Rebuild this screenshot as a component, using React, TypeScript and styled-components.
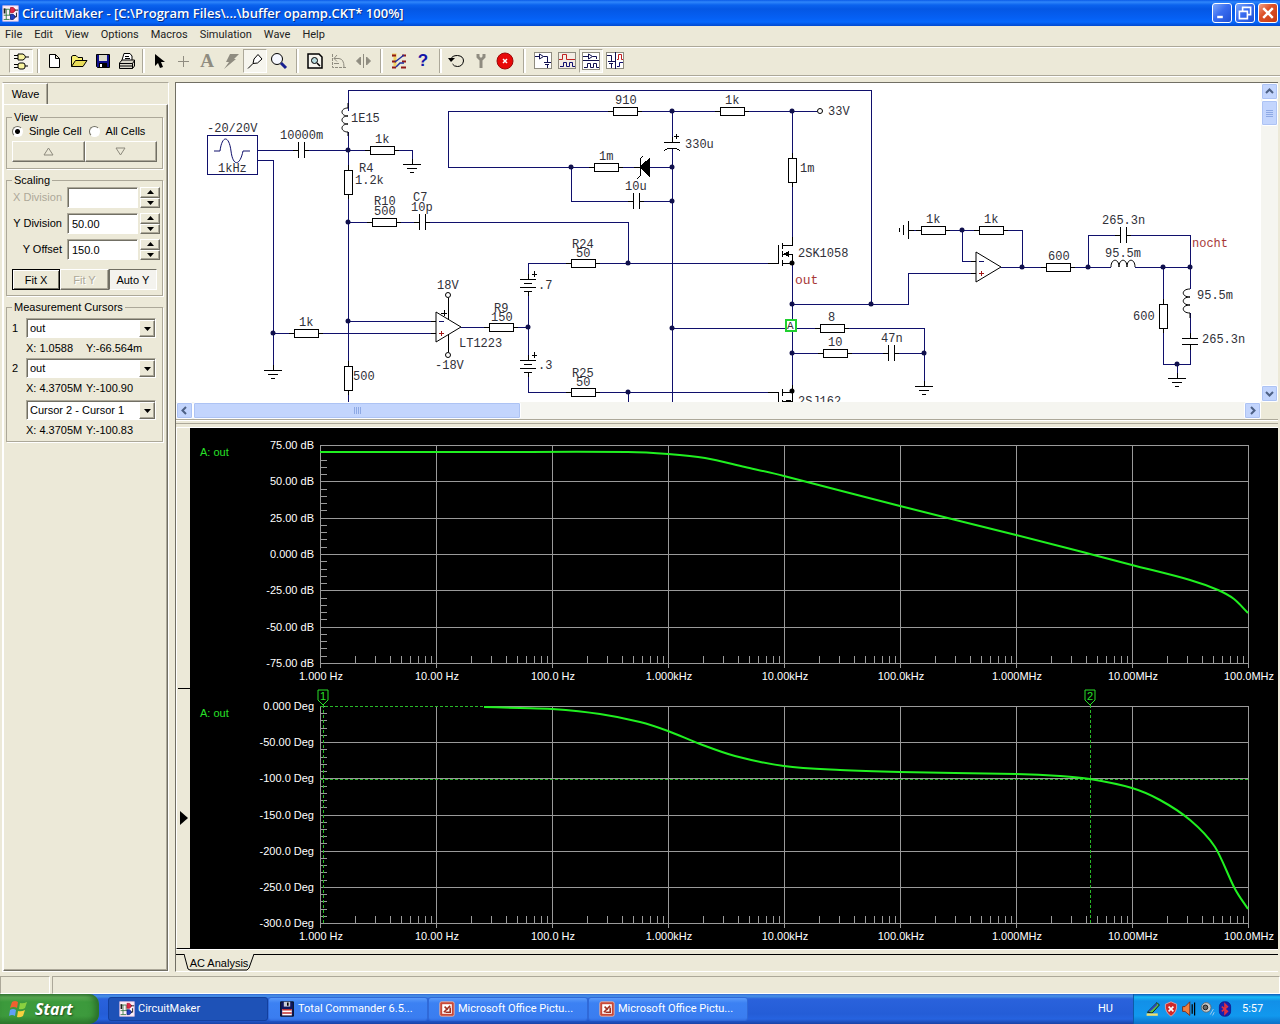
import React from "react";
import styled, { createGlobalStyle, css } from "styled-components";

const face = "#ece9d8";
const shade = "#aca899";
const dark = "#716f64";
const ui = '"Liberation Sans", Arial, sans-serif';
const shell = 'Roboto, "Noto Sans", sans-serif';

const Global = createGlobalStyle`
  * { box-sizing: border-box; }
  body { margin: 0; background: ${face}; font: 11px/14px ${ui}; color: #000; }
  button, input, select { font: inherit; color: inherit; margin: 0; border-radius: 0; }
`;

const raised = css`
  background: ${face};
  border: 1px solid;
  border-color: #fff ${dark} ${dark} #fff;
  box-shadow: inset -1px -1px ${shade};
`;
const sunken = css`
  border: 1px solid;
  border-color: ${shade} #fff #fff ${shade};
  box-shadow: inset 1px 1px ${dark};
`;

const Desktop = styled.div`
  height: 100vh;
  display: flex;
  flex-direction: column;
  overflow: hidden;
`;

/* ---------- title and menu ---------- */
const TitleBar = styled.header`
  flex: none;
  height: 26px;
  display: flex;
  align-items: center;
  gap: 3px;
  padding: 0 2px;
  background: linear-gradient(#0a5be8 0, #2f86fb 2px, #0b63ee 5px, #0457e4 9px, #0560f4 18px, #0668fc 22px, #0149cf 26px);
`;
const Title = styled.h1`
  flex: 1;
  margin: 0;
  color: #fff;
  font: 600 13px/20px "Open Sans", "Noto Sans", sans-serif;
  text-shadow: 1px 1px #0a2f86;
  white-space: nowrap;
`;
const WindowButtons = styled.div`
  display: flex;
  gap: 3px;
`;
const WindowButton = styled.button<{ $close?: boolean }>`
  width: 20px;
  height: 20px;
  padding: 0;
  border: 1px solid #fff;
  border-radius: 3px;
  display: grid;
  place-items: center;
  background: ${(p) =>
    p.$close
      ? "linear-gradient(135deg, #f0a088, #dd5128 40%, #c63a12)"
      : "linear-gradient(135deg, #7fa9fa, #3a6df0 45%, #1f4fd4)"};
`;
const MenuBar = styled.nav`
  flex: none;
  height: 20px;
  display: flex;
  align-items: flex-start;
  gap: 12px;
  padding: 2px 0 0 5px;
`;
const MenuItem = styled.button`
  padding: 0;
  border: 0;
  background: none;
  color: #222;
  font: 11px/14px ${shell};
`;

/* ---------- toolbar ---------- */
const ToolBar = styled.div`
  flex: none;
  height: 30px;
  display: flex;
  align-items: center;
  padding-left: 9px;
  border-top: 1px solid ${shade};
  border-bottom: 1px solid ${shade};
  box-shadow: inset 0 1px #fff, 0 1px #fff;
`;
const Tool = styled.button<{ $on?: boolean }>`
  width: 24px;
  height: 24px;
  padding: 0;
  display: grid;
  place-items: center;
  background: ${(p) => (p.$on ? "#f6f5ee" : "none")};
  border: 1px solid;
  border-color: ${(p) => (p.$on ? `${shade} #fff #fff ${shade}` : "transparent")};
`;
const ToolGap = styled.span<{ $w: number }>`
  width: ${(p) => p.$w}px;
  height: 24px;
  display: flex;
  justify-content: center;
  &::before {
    content: "";
    width: 2px;
    border-left: 1px solid ${shade};
    background: #fff;
  }
`;

/* ---------- side panel ---------- */
const Workspace = styled.div`
  flex: 1;
  min-height: 0;
  display: flex;
  gap: 6px;
  padding: 6px 2px 4px 2px;
`;
const Side = styled.aside`
  flex: none;
  width: 167px;
  display: flex;
  flex-direction: column;
  border-left: 1px solid #fff;
  border-right: 1px solid #fff;
  border-bottom: 1px solid #fff;
  border-top: 1px solid ${shade};
`;
const SideTab = styled.button`
  align-self: flex-start;
  width: 45px;
  height: 21px;
  padding: 0;
  ${raised};
  border-bottom: 0;
  box-shadow: inset -1px 0 ${shade};
`;
const SidePage = styled.form`
  flex: 1;
  display: flex;
  flex-direction: column;
  gap: 4px;
  padding: 5px 4px 0 2px;
  border: 1px solid;
  border-color: #fff ${dark} ${dark} #fff;
  box-shadow: inset -1px -1px ${shade};
`;
const Group = styled.fieldset<{ $h: number }>`
  height: ${(p) => p.$h}px;
  min-width: 0;
  margin: 0;
  padding: 0 5px;
  border: 1px solid ${shade};
  box-shadow: 1px 1px #fff;
`;
const Legend = styled.legend`
  height: 14px;
  padding: 0 2px;
`;
const Radios = styled.div`
  display: flex;
  gap: 7px;
  height: 17px;
`;
const RadioLabel = styled.label`
  display: flex;
  align-items: center;
  gap: 6px;
  height: 14px;
  white-space: nowrap;
`;
const Radio = styled.input`
  appearance: none;
  width: 11px;
  height: 11px;
  border-radius: 50%;
  border: 1px solid;
  border-color: ${dark} #fff #fff ${dark};
  background: #fff;
  &:checked {
    background: radial-gradient(#000 0 2px, #fff 3px);
  }
`;
const ButtonRow = styled.div`
  display: flex;
  height: 21px;
`;
const ScaleButtons = styled(ButtonRow)`
  margin-top: 4px;
`;
const PushButton = styled.button<{ $kind?: "default" | "down" }>`
  flex: 1;
  padding: 0;
  ${raised};
  ${(p) => p.$kind === "default" && css`border-color: #000; box-shadow: inset 1px 1px #fff, inset -1px -1px ${dark};`}
  ${(p) => p.$kind === "down" && css`border-color: ${dark} #fff #fff ${dark}; background: #f4f3ee; box-shadow: none;`}
  &:disabled {
    color: ${shade};
    text-shadow: 1px 1px #fff;
  }
`;
const FieldRow = styled.div`
  display: grid;
  grid-template-columns: 50px 71px 17px;
  column-gap: 5px;
  align-items: start;
  height: 26px;
`;
const FieldLabel = styled.label<{ $off?: boolean }>`
  line-height: 20px;
  text-align: right;
  white-space: nowrap;
  direction: rtl;
  color: ${(p) => (p.$off ? shade : "#000")};
`;
const Field = styled.input`
  width: 71px;
  height: 21px;
  padding: 0 4px;
  background: #fff;
  ${sunken};
`;
const Spinner = styled.div`
  display: flex;
  flex-direction: column;
  height: 21px;
  margin-left: -3px;
`;
const SpinButton = styled.button`
  flex: 1;
  padding: 0;
  display: grid;
  place-items: center;
  ${raised};
`;
const CursorBlock = styled.div`
  padding-top: 4px;
`;
const CursorRow = styled.div`
  display: grid;
  grid-template-columns: 14px 130px;
  align-items: center;
  height: 20px;
`;
const Combo = styled.div`
  grid-column: 2;
  position: relative;
`;
const Select = styled.select`
  appearance: none;
  display: block;
  width: 100%;
  height: 20px;
  padding: 0 3px;
  background: #fff;
  ${sunken};
`;
const ComboArrow = styled.span`
  position: absolute;
  top: 2px;
  right: 1px;
  width: 16px;
  height: 17px;
  display: grid;
  place-items: center;
  pointer-events: none;
  ${raised};
`;
const Readout = styled.div`
  display: grid;
  grid-template-columns: 60px 1fr;
  height: 20px;
  line-height: 20px;
  padding-left: 14px;
  white-space: nowrap;
`;
const TallReadout = styled(Readout)`
  height: 22px;
`;

/* ---------- documents ---------- */
const Documents = styled.main`
  flex: 1;
  min-width: 0;
  display: flex;
  flex-direction: column;
  border-left: 1px solid ${dark};
  border-top: 1px solid ${dark};
  border-bottom: 1px solid #fff;
`;
const SheetView = styled.section`
  flex: none;
  display: grid;
  grid-template-columns: 1fr 17px;
  grid-template-rows: 319px 17px;
  background: ${face};
`;
const Sheet = styled.svg`
  width: 100%;
  height: 100%;
  background: #fff;
  overflow: hidden;
  font: 12px "Liberation Mono", monospace;
`;
const Track = styled.div<{ $vertical?: boolean }>`
  display: flex;
  flex-direction: ${(p) => (p.$vertical ? "column" : "row")};
  background: #f5f5f0;
`;
const scrollFace = css`
  border: 1px solid #fff;
  border-radius: 2px;
  background: #c3d5fd;
  box-shadow: inset 0 0 0 1px #adc3f4;
`;
const Arrow = styled.button`
  ${scrollFace};
  flex: none;
  width: 17px;
  height: 17px;
  padding: 0;
  display: grid;
  place-items: center;
`;
const Thumb = styled.div<{ $size: number; $vertical?: boolean }>`
  ${scrollFace};
  width: ${(p) => (p.$vertical ? 17 : p.$size)}px;
  height: ${(p) => (p.$vertical ? p.$size : 17)}px;
  display: grid;
  place-items: center;
`;
const Space = styled.span`
  flex: 1;
`;
const Splitter = styled.div`
  flex: none;
  height: 9px;
  border-top: 1px solid ${shade};
  border-bottom: 1px solid #fff;
  box-shadow: inset 0 1px #fff, inset 0 -3px ${face}, inset 0 -4px ${shade};
`;
const PlotView = styled.section`
  flex: 1;
  min-height: 0;
  display: flex;
`;
const Gutter = styled.div`
  width: 14px;
  display: flex;
  flex-direction: column;
  padding-left: 1px;
  border-left: 1px solid #fff;
  border-bottom: 1px solid #000;
`;
const GutterCell = styled.div<{ $line?: boolean }>`
  flex: 1;
  display: flex;
  align-items: center;
  padding-left: 2px;
  border-bottom: ${(p) => (p.$line ? "1px solid #000" : "0")};
`;
const Plot = styled.svg`
  flex: 1;
  height: 100%;
  min-width: 0;
  background: #000;
  overflow: hidden;
  font: 11px ${ui};
`;
const TabStrip = styled.div`
  flex: none;
  height: 22px;
  display: flex;
  border-top: 1px solid #fff;
  padding-top: 4px;
`;
const StripLine = styled.span<{ $w?: number }>`
  ${(p) => (p.$w ? `width: ${p.$w}px` : "flex: 1")};
  border-top: 1px solid #000;
`;
const PlotTab = styled.button`
  position: relative;
  width: 70px;
  height: 17px;
  padding: 0;
  border: 0;
  background: none;
  white-space: nowrap;
`;
const TabOutline = styled.svg`
  position: absolute;
  inset: 0;
`;

/* ---------- status and taskbar ---------- */
const Status = styled.footer`
  flex: none;
  height: 18px;
  display: grid;
  grid-template-columns: 50px 1fr;
  gap: 2px;
`;
const StatusCell = styled.div`
  border: 1px solid;
  border-color: ${shade} #fff #fff ${shade};
`;
const TaskBar = styled.footer`
  flex: none;
  height: 30px;
  display: flex;
  background: linear-gradient(#3168d5 0, #4993e6 2px, #2a62dc 5px, #245dd7 20px, #2663e0 25px, #1941a5 30px);
  color: #fff;
  font: 11px/14px ${shell};
`;
const StartButton = styled.button`
  width: 99px;
  padding: 0 0 0 9px;
  margin-right: 9px;
  border: 0;
  border-radius: 0 10px 10px 0;
  display: flex;
  align-items: center;
  gap: 6px;
  background: linear-gradient(#3c813c 0, #5eac56 3px, #3c9a3c 8px, #3d9a3d 22px, #2f7c2f 30px);
  box-shadow: inset -4px 0 6px #2a6e2a;
  color: #fff;
  font: italic 700 16px/20px "Open Sans", "Noto Sans", sans-serif;
  text-shadow: 1px 1px 2px #1d4a1d;
`;
const Task = styled.button<{ $on?: boolean }>`
  flex: 0 1 160px;
  min-width: 0;
  height: 24px;
  margin-top: 3px;
  padding: 0 8px 0 10px;
  display: flex;
  align-items: center;
  gap: 3px;
  white-space: nowrap;
  border: 1px solid ${(p) => (p.$on ? "#123f9e" : "#3069d8")};
  border-radius: 3px;
  background: ${(p) => (p.$on ? "#1e52b7" : "linear-gradient(#5b9bfa, #3c81f3 5px, #3a7df0 20px, #3271e6)")};
  color: #fff;
  font-family: ${shell};
`;
const Lang = styled.span`
  align-self: center;
  margin-left: auto;
  padding-right: 20px;
`;
const Tray = styled.div`
  width: 147px;
  display: flex;
  align-items: center;
  gap: 2px;
  padding-left: 11px;
  border-left: 1px solid #0d5ba8;
  background: linear-gradient(#0c59b9 0, #18b9f6 3px, #1290e8 7px, #1198ee 22px, #0d70c8 30px);
`;
const Clock = styled.time`
  margin-left: 7px;
`;

/* ---------- icons ---------- */
const Icon = ({ children, size = 20 }: { children: React.ReactNode; size?: number }) => (
  <svg width={size} height={size} viewBox="0 0 20 20" fill="none" stroke="#000" aria-hidden="true">
    {children}
  </svg>
);

const Logo = ({ size = 17 }: { size?: number }) => (
  <Icon size={size}>
    <rect x="1" y="1" width="18" height="18" fill="#fdf0f8" stroke="#ecc4e2" />
    <path d="M2 5H9M5 5V17M9 5V12M2 12H10M2 17H9" stroke="#287038" />
    <path d="M3 4V10" stroke="#202020" strokeWidth="2" />
    <path d="M10 3H13Q18 6 13 9H10Z" fill="#e02848" stroke="#b01830" />
    <path d="M10 11H13Q18 14 13 17H10Z" fill="#2040c0" stroke="#102080" />
    <path d="M15 6H19M15 14H17V9" />
  </Icon>
);

const gray = "#8f8c80";
const toolIcons: Record<string, React.ReactNode> = {
  Parts: (
    <>
      <path d="M7 3H12Q17 6 12 9H7Z" fill="#f8f4a0" />
      <rect x="7" y="12" width="7" height="6" rx="2" fill="#f8f4a0" />
      <path d="M3 4.500H7M3 7.500H7M15 6H18M3 13.500H7M3 16.500H7M14 15H17" />
    </>
  ),
  New: <path d="M4.500 3.500H10.500L14.500 7.500V16.500H4.500ZM10.500 3.500V7.500H14.500" fill="#fff" />,
  Open: (
    <>
      <path d="M2.500 15.500V5.500L4 4.500H7L9 6.500H13.500V9" fill="#f6ee70" />
      <path d="M2.500 15.500L6.500 9.500H18L14 15.500Z" fill="#e8dc58" />
    </>
  ),
  Save: (
    <>
      <path d="M3.500 3.500H16.500V16.500H4.500L3.500 15.500Z" fill="#10108c" />
      <path d="M6 4H14V10H6Z" fill="#dcdccc" stroke="none" />
      <path d="M6 12H14V16H6Z" fill="#000" stroke="none" />
      <path d="M7 13H9V16H7Z" fill="#fff" stroke="none" />
    </>
  ),
  Print: (
    <>
      <path d="M5 9L7 2.500H13L15 5V9" fill="#fff" />
      <path d="M8 5.500H12M8 7.500H13" />
      <path d="M2.500 12L5 9H17.500V15L15.500 17.500H2.500Z" fill="#d8d5c8" />
      <path d="M2.500 12.500H15.500V17.500M15.500 12.500L17.500 9.500M3 15H15" />
    </>
  ),
  Select: <path d="M6 3V15L9 12L11 17L14 16L12 11H16Z" fill="#000" stroke="none" />,
  Wire: <path d="M10.500 5V16M5 10.500H16" stroke={gray} />,
  Delete: <path d="M9 3H18L13 8H15L3 18L8 11H5Z" fill={gray} stroke="none" />,
  Probe: <path d="M3 17.500L8 12.500M8 12.500L9 8L13 3.500L17 8L12.500 12Z" fill="#fff" />,
  Zoom: (
    <>
      <circle cx="8" cy="8" r="5.500" fill="#f6f8ff" />
      <path d="M12 12L17 17" stroke="#182090" strokeWidth="3" />
    </>
  ),
  Fit: (
    <>
      <path d="M3 3H14L17 6V17H3Z" fill="#f6f5ee" strokeWidth="1.500" />
      <circle cx="9.500" cy="9.500" r="3" fill="#b8dce0" />
      <path d="M12 12L15 15" strokeWidth="1.500" />
    </>
  ),
  Rotate: (
    <>
      <path d="M3.500 3V16.500H18" stroke={gray} strokeDasharray="3 1" />
      <path d="M5 7.500H10Q15 8 15 16M8 4L5 7.500L8 10.500M5 12.500H10" stroke={gray} />
    </>
  ),
  Mirror: <path d="M7.500 6V14L3.500 10ZM13.500 6V14L17.500 10ZM10.500 3V17" fill={gray} stroke={gray} />,
  Trace: (
    <>
      <path d="M3 4H6V15" stroke="#f0d060" strokeWidth="3" />
      <path d="M3 4.500H7M3 10.500H7M13 4.500H17M3 16.500H7M12 16.500H17M13 10.500H17" stroke="#901818" strokeWidth="2" />
      <path d="M6 11L15 4M7 16L11 12H15" stroke="#2030a0" strokeWidth="1.500" />
    </>
  ),
  Reset: (
    <>
      <path d="M4 8Q5 4.500 10.500 4.500Q16.500 5 16.500 10Q15.500 15.500 10.500 15.500Q7 15.500 5.500 13" />
      <path d="M1 7H8L4 11Z" fill="#000" stroke="none" />
    </>
  ),
  Step: <path d="M7 3V6L10 9L13 6V3M10 8V17" stroke={gray} strokeWidth="3" />,
  Stop: (
    <>
      <circle cx="10" cy="10" r="8" fill="#e80808" stroke="#9c0808" />
      <path d="M8 8L12 12M12 8L8 12" stroke="#fff" strokeWidth="1.500" />
    </>
  ),
  Schematic: (
    <>
      <rect x="1.500" y="1.500" width="17" height="16" fill="#fff" stroke={gray} />
      <path d="M2 5.500H6M6.500 3V8L10.500 5.500ZM10.500 5.500H14.500V11M11 11.500H18M12 13.500H16M14.500 14V17" stroke="#101050" />
    </>
  ),
  Waves: (
    <>
      <rect x="1.500" y="1.500" width="17" height="16" fill="#f3ece4" stroke={gray} />
      <path d="M2 8.500H5.500V3.500H9.500V8.500H18" stroke="#c02020" />
      <path d="M3 15.500H6.500V11.500H9.500V15.500H12.500V11.500H15.500V15.500H18" stroke="#101070" />
    </>
  ),
  Split: (
    <>
      <rect x="1.500" y="1.500" width="17" height="17" fill="#fff" stroke={gray} />
      <path d="M2 5.500H7M7.500 3V8L11.500 5.500ZM11.500 5.500H15.500V8M2 9.500H18M3 16.500H6.500V12.500H9.500V16.500H12.500V12.500H15.500V16.500H18" stroke="#101050" />
    </>
  ),
  Tile: (
    <>
      <rect x="1.500" y="1.500" width="17" height="16" fill="#fff" stroke={gray} />
      <path d="M2 4.500H6.500V10M3 10.500H10M4 12.500H8M6.500 13V17M10.500 1V18" stroke="#101050" />
      <path d="M12 8.500H13.500V3.500H16.500V8.500H18" stroke="#c02020" />
      <path d="M12 15.500H14.500V11.500H18" stroke="#101070" />
    </>
  ),
};
const HelpMark = styled.span`
  color: #1515a8;
  font: 700 17px/20px ${ui};
`;
const TextMark = styled.span`
  color: ${gray};
  font: 700 19px/20px "Liberation Serif", serif;
`;
const toolGlyphs: Record<string, React.ReactNode> = {
  Help: <HelpMark>?</HelpMark>,
  Text: <TextMark>A</TextMark>,
};

const toolGroups: { gap: number; names: string[] }[] = [
  { gap: 10, names: ["Parts"] },
  { gap: 8, names: ["New", "Open", "Save", "Print"] },
  { gap: 12, names: ["Select", "Wire", "Text", "Delete", "Probe", "Zoom"] },
  { gap: 12, names: ["Fit", "Rotate", "Mirror"] },
  { gap: 10, names: ["Trace", "Help"] },
  { gap: 14, names: ["Reset", "Step", "Stop"] },
  { gap: 0, names: ["Schematic", "Waves", "Split", "Tile"] },
];
const pressed = ["Parts", "Probe", "Split"];

/* ---------- schematic parts ---------- */
const K = "#000";
const HRes = ({ x, y }: { x: number; y: number }) => (
  <>
    <path d={`M${x - 5} ${y}H${x + 29}`} stroke={K} />
    <rect x={x} y={y - 4} width="24" height="8" fill="#fff" stroke={K} />
  </>
);
const VRes = ({ x, y }: { x: number; y: number }) => (
  <>
    <path d={`M${x} ${y - 5}V${y + 29}`} stroke={K} />
    <rect x={x - 4} y={y} width="8" height="24" fill="#fff" stroke={K} />
  </>
);
const HCap = ({ x, y }: { x: number; y: number }) => (
  <>
    <path d={`M${x + 1} ${y}H${x + 5}`} stroke="#fff" />
    <path d={`M${x - 5} ${y}H${x}V${y - 8}V${y + 8}M${x + 11} ${y}H${x + 6}V${y - 8}V${y + 8}`} stroke={K} />
  </>
);
const Ground = ({ x, y }: { x: number; y: number }) => (
  <path d={`M${x} ${y - 5}V${y}M${x - 9} ${y}H${x + 9}M${x - 5} ${y + 4}H${x + 5}M${x - 2} ${y + 8}H${x + 2}`} stroke={K} />
);
const Battery = ({ x, y }: { x: number; y: number }) => (
  <>
    <path d={`M${x} ${y}V${y + 13}`} stroke="#fff" />
    <path
      d={`M${x} ${y - 5}V${y}M${x - 8} ${y}H${x + 8}M${x - 4} ${y + 4}H${x + 4}M${x - 8} ${y + 8}H${x + 8}M${x - 4} ${y + 12}H${x + 4}M${x} ${y + 12}V${y + 17}M${x + 4} ${y - 5}H${x + 9}M${x + 6} ${y - 8}V${y - 2}`}
      stroke={K}
    />
  </>
);
const OpAmp = ({ x, y }: { x: number; y: number }) => (
  <>
    <path d={`M${x} ${y - 15}V${y + 15}L${x + 25} ${y}Z`} fill="#fff" stroke={K} shapeRendering="auto" />
    <path d={`M${x - 5} ${y - 6}H${x}M${x - 5} ${y + 6}H${x}`} stroke={K} />
    <path d={`M${x + 3} ${y - 6}H${x + 8}`} stroke="#10106c" />
    <path d={`M${x + 3} ${y + 6}H${x + 8}M${x + 5} ${y + 4}V${y + 9}`} stroke="#a01818" />
  </>
);
const Mosfet = ({ x, y }: { x: number; y: number }) => (
  <>
    <path
      d={`M${x - 24} ${y}H${x - 14}V${y - 18}M${x - 10} ${y - 20}V${y - 14}M${x - 10} ${y - 12}V${y - 6}M${x - 10} ${y - 3}V${y + 3}M${x - 10} ${y}H${x}V${y - 9}H${x - 10}M${x - 10} ${y - 18}H${x}V${y - 26}`}
      stroke={K}
    />
    <path d={`M${x - 9} ${y - 9}L${x - 3} ${y - 12}V${y - 6}Z`} fill={K} />
  </>
);

const wires = [
  "M348 111V90H871V304", "M614 111H448V167H571", "M257 150H298M304 150H348", "M257 160H273V366",
  "M348 132V402", "M348 150H370M394 150H412V163", "M348 222H372M396 222H419M425 222H628V263",
  "M273 333H294M318 333H436", "M348 321H436", "M461 327H489M513 327H528", "M448 298V352",
  "M571 263H528V392H571", "M595 263H770M595 392H770", "M628 392V402", "M638 111H720M744 111H817",
  "M672 111V142M672 149V402", "M571 167H594M618 167H672M571 167V201H633M639 201H672",
  "M792 111V240M792 263V388", "M792 304H908V273H976", "M672 328H820M844 328H924V385",
  "M792 353H823M847 353H888M894 353H924", "M908 230H921M945 230H979M1003 230H1022V267",
  "M962 230V261H976", "M1001 267H1046M1070 267H1111M1135 267H1190", "M1088 267V235H1120M1126 235H1190V289",
  "M1190 313V338M1190 345V364H1163V267", "M1177 364V378",
];
const dots = [
  [348, 150], [348, 222], [348, 321], [273, 333], [528, 327], [571, 167], [672, 111], [672, 167], [672, 201],
  [672, 328], [792, 111], [628, 263], [628, 392], [792, 304], [871, 304], [792, 353], [924, 353], [962, 230],
  [1022, 267], [1088, 267], [1163, 267], [1190, 267], [1177, 364],
];
const hResistors = [
  [370, 150], [372, 222], [294, 333], [489, 327], [571, 263], [571, 392], [613, 111], [720, 111], [594, 167],
  [820, 328], [823, 353], [921, 230], [979, 230], [1046, 267],
];
const vResistors = [[348, 170], [348, 366], [792, 158], [1163, 304]];
const hCapacitors = [[298, 150], [419, 222], [633, 201], [888, 353], [1120, 235]];
const grounds = [[412, 164], [273, 370], [924, 386], [1177, 378]];
const sheetLabels: [number, number, string][] = [
  [207, 132, "-20/20V"], [218, 172, "1kHz"], [280, 139, "10000m"], [351, 122, "1E15"], [375, 143, "1k"],
  [359, 172, "R4"], [355, 184, "1.2k"], [374, 205, "R10"], [374, 215, "500"], [413, 201, "C7"], [411, 211, "10p"],
  [299, 326, "1k"], [353, 380, "500"], [437, 289, "18V"], [435, 369, "-18V"], [459, 347, "LT1223"],
  [494, 312, "R9"], [491, 321, "150"], [538, 289, ".7"], [538, 369, ".3"], [572, 248, "R24"], [576, 257, "50"],
  [572, 377, "R25"], [576, 386, "50"], [615, 104, "910"], [725, 104, "1k"], [828, 115, "33V"], [685, 148, "330u"],
  [599, 160, "1m"], [625, 190, "10u"], [800, 172, "1m"], [798, 257, "2SK1058"], [798, 405, "2SJ162"],
  [828, 321, "8"], [828, 346, "10"], [881, 342, "47n"], [926, 223, "1k"], [984, 223, "1k"], [1048, 260, "600"],
  [1102, 224, "265.3n"], [1105, 257, "95.5m"], [1133, 320, "600"], [1197, 299, "95.5m"], [1202, 343, "265.3n"],
];

const Schematic = () => (
  <Sheet role="img" aria-label="buffer opamp.CKT">
    <g transform="translate(-176 -83)" fill="none" shapeRendering="crispEdges">
      <g stroke="#10106c">
        {wires.map((d) => <path key={d} d={d} />)}
      </g>
      <rect x="207" y="135" width="50" height="39" fill="#fff" stroke="#10106c" />
      <path d="M214 151H220C222 135 229 135 231 151S240 166 243 151H250" stroke="#10106c" shapeRendering="auto" />
      {hResistors.map(([x, y]) => <HRes key={`${x} ${y}`} x={x} y={y} />)}
      {vResistors.map(([x, y]) => <VRes key={`${x} ${y}`} x={x} y={y} />)}
      {hCapacitors.map(([x, y]) => <HCap key={`${x} ${y}`} x={x} y={y} />)}
      {grounds.map(([x, y]) => <Ground key={`${x} ${y}`} x={x} y={y} />)}
      <Battery x={528} y={279} />
      <Battery x={528} y={360} />
      <OpAmp x={436} y={327} />
      <OpAmp x={976} y={267} />
      <g stroke={K}>
        <path d="M448 298V319M448 335V352M441 313H447M444 310V316" />
        <path d="M348 103V108M348 132V136M348 108C340 108 340 116 348 116C340 116 340 124 348 124C340 124 340 132 348 132" shapeRendering="auto" />
        <path d="M1190 289C1181 289 1181 297 1190 297C1181 297 1181 305 1190 305C1181 305 1181 313 1190 313V318" shapeRendering="auto" />
        <path d="M1111 267C1111 258 1119 258 1119 267C1119 258 1127 258 1127 267C1127 258 1135 258 1135 267" shapeRendering="auto" />
        <path d="M664 142H680M672 137V142M664 151Q667 148 672 148Q677 148 680 151M674 136H679M676 134V139" />
        <path d="M643 156L640 159V176L637 179M634 167H640" />
        <path d="M640 167L649 159V176Z" fill={K} />
        <path d="M1182 338H1198M1182 344H1198M1190 333V338M1190 344V350" />
        <path d="M908 221V239M903 225V235M899 228V232M908 230H914" />
        <path d="M768 392H778V402M782 389V396M782 392H792M782 400V402M782 401H792V385M786 400H790V402" />
        <g fill="#fff" shapeRendering="auto">
          <circle cx="448" cy="295" r="2.5" />
          <circle cx="448" cy="355" r="2.5" />
          <circle cx="820" cy="111" r="2.5" />
        </g>
      </g>
      <Mosfet x={792} y={263} />
      <g shapeRendering="auto" fill="#10104c">
        {dots.map(([x, y]) => <circle key={`${x} ${y}`} cx={x} cy={y} r="2.5" />)}
        <circle cx="792" cy="263" r="2.5" fill={K} />
        <circle cx="792" cy="391" r="2.5" fill={K} />
      </g>
      <rect x="786" y="320" width="10" height="11" fill="#fff" stroke="#20d030" strokeWidth="2" />
      <g fill="#303038">
        {sheetLabels.map(([x, y, t]) => <text key={`${x} ${y}`} x={x} y={y}>{t}</text>)}
        <text x="787" y="329" fontSize="11">A</text>
      </g>
      <g fill="#a83838">
        <text x="795" y="284" fontSize="13">out</text>
        <text x="1192" y="247">nocht</text>
      </g>
    </g>
  </Sheet>
);

/* ---------- analysis plots ---------- */
const left = 320;
const decade = 116;
const freqs = ["1.000 Hz", "10.00 Hz", "100.0 Hz", "1.000kHz", "10.00kHz", "100.0kHz", "1.000MHz", "10.00MHz", "100.0MHz"];
const smooth = (p: number[][]) =>
  p.reduce((d, [x, y], i) => {
    if (i === 0) return `M${x} ${y}`;
    const a = p[i - 2] || p[i - 1];
    const b = p[i - 1];
    const n = p[i + 1] || p[i];
    const h = (x - b[0]) / 3;
    const s1 = (y - a[1]) / (x - a[0]);
    const s2 = (n[1] - b[1]) / (n[0] - b[0]);
    return `${d}C${b[0] + h} ${b[1] + h * s1} ${x - h} ${y - h * s2} ${x} ${y}`;
  }, "");
const gain = [[320, 452], [480, 452], [628, 452], [668, 454], [705, 458], [745, 467], [784, 476], [900, 506], [1016, 535], [1090, 554], [1132, 565], [1190, 580], [1218, 590], [1234, 599], [1248, 613]];
const phase = [[484, 707], [520, 708], [552, 709], [600, 714], [640, 722], [668, 731], [700, 744], [735, 756], [784, 766], [840, 770], [900, 772], [1016, 774], [1060, 776], [1090, 779], [1132, 788], [1160, 800], [1190, 820], [1215, 847], [1235, 889], [1248, 909]];

const Grid = ({ top, bottom, labels }: { top: number; bottom: number; labels: string[] }) => {
  const step = (bottom - top) / (labels.length - 1);
  const count = (labels.length - 1) * 5;
  const lines = labels.map((_, i) => `M${left} ${Math.round(top + i * step)}H1248`).join("");
  const columns = freqs.map((_, i) => `M${left + i * decade} ${top}V${bottom + 5}`).join("");
  const sideTicks = Array.from({ length: count }, (_, i) => `M${left} ${Math.round(top + (i * step) / 5)}h7`).join("");
  const floorTicks = freqs
    .slice(1)
    .flatMap((_, i) => [2, 3, 4, 5, 6, 7, 8, 9].map((n) => `M${Math.round(left + (i + Math.log10(n)) * decade)} ${bottom}v-7`))
    .join("");
  return (
    <>
      <path d={lines + columns + sideTicks + floorTicks} stroke="#9a9a9a" shapeRendering="crispEdges" />
      <g fill="#fff">
        {labels.map((t, i) => (
          <text key={t} x="314" y={Math.round(top + i * step) + 4} textAnchor="end">{t}</text>
        ))}
        {freqs.map((t, i) => (
          <text key={t} x={left + 1 + i * decade} y={bottom + 17} textAnchor="middle">{t}</text>
        ))}
      </g>
    </>
  );
};

const Analysis = () => (
  <Plot role="img" aria-label="AC Analysis">
    <g transform="translate(-190 -428)" fill="none">
      <Grid top={445} bottom={663} labels={["75.00 dB", "50.00 dB", "25.00 dB", "0.000 dB", "-25.00 dB", "-50.00 dB", "-75.00 dB"]} />
      <Grid top={706} bottom={923} labels={["0.000 Deg", "-50.00 Deg", "-100.0 Deg", "-150.0 Deg", "-200.0 Deg", "-250.0 Deg", "-300.0 Deg"]} />
      <path d="M327 706H484" stroke="#000" shapeRendering="crispEdges" />
      <g stroke="#28b828" strokeDasharray="3 2" shapeRendering="crispEdges">
        <path d="M323 705V923M1090 705V923M320 706H484M320 779H1248" />
      </g>
      <g stroke="#28e028">
        <path d="M318 690H328V700L323 705L318 700ZM1085 690H1095V700L1090 705L1085 700Z" fill="#000" />
        <path d={smooth(gain) + smooth(phase)} stroke="#20f020" strokeWidth="2" />
      </g>
      <g fill="#28e028">
        <text x="323" y="700" textAnchor="middle">1</text>
        <text x="1090" y="700" textAnchor="middle">2</text>
        <text x="200" y="456">A: out</text>
        <text x="200" y="717">A: out</text>
      </g>
    </g>
  </Plot>
);

const Chevron = ({ turn }: { turn: number }) => (
  <svg width="9" height="9" viewBox="0 0 9 9" fill="none" stroke="#4d6185" strokeWidth="2" aria-hidden="true">
    <path d="M1 6L4.500 2.500L8 6" transform={`rotate(${turn} 4.5 4.5)`} />
  </svg>
);
const Tri = ({ down }: { down?: boolean }) => (
  <svg width="7" height="4" viewBox="0 0 7 4" aria-hidden="true">
    <path d={down ? "M0 0H7L3.500 4Z" : "M0 4H7L3.500 0Z"} />
  </svg>
);
const PaleTri = ({ down }: { down?: boolean }) => (
  <svg width="11" height="9" viewBox="0 0 11 9" fill="none" stroke="#8c897c" aria-hidden="true">
    <path d={down ? "M1 1H10L5.500 8Z" : "M1 8H10L5.500 1Z"} />
  </svg>
);

const Spin = ({ name }: { name: string }) => (
  <Spinner>
    <SpinButton type="button" aria-label={`Increase ${name}`}><Tri /></SpinButton>
    <SpinButton type="button" aria-label={`Decrease ${name}`}><Tri down /></SpinButton>
  </Spinner>
);
const Drop = ({ id, label, value }: { id: string; label?: string; value: string }) => (
  <Combo>
    <Select id={id} aria-label={label} defaultValue={value}><option>{value}</option></Select>
    <ComboArrow><Tri down /></ComboArrow>
  </Combo>
);

const WavePanel = () => (
  <Side>
    <SideTab>Wave</SideTab>
    <SidePage onSubmit={(e) => e.preventDefault()}>
      <Group $h={59}>
        <Legend>View</Legend>
        <Radios>
          <RadioLabel><Radio type="radio" name="cells" defaultChecked />Single Cell</RadioLabel>
          <RadioLabel><Radio type="radio" name="cells" />All Cells</RadioLabel>
        </Radios>
        <ButtonRow>
          <PushButton type="button" aria-label="Previous cell"><PaleTri /></PushButton>
          <PushButton type="button" aria-label="Next cell"><PaleTri down /></PushButton>
        </ButtonRow>
      </Group>
      <Group $h={123}>
        <Legend>Scaling</Legend>
        <FieldRow>
          <FieldLabel htmlFor="xdiv" $off>X Division</FieldLabel>
          <Field id="xdiv" disabled />
          <Spin name="X Division" />
        </FieldRow>
        <FieldRow>
          <FieldLabel htmlFor="ydiv">Y Division</FieldLabel>
          <Field id="ydiv" defaultValue="50.00" />
          <Spin name="Y Division" />
        </FieldRow>
        <FieldRow>
          <FieldLabel htmlFor="yoff">Y Offset</FieldLabel>
          <Field id="yoff" defaultValue="150.0" />
          <Spin name="Y Offset" />
        </FieldRow>
        <ScaleButtons>
          <PushButton type="button" $kind="default">Fit X</PushButton>
          <PushButton type="button" disabled>Fit Y</PushButton>
          <PushButton type="button" $kind="down">Auto Y</PushButton>
        </ScaleButtons>
      </Group>
      <Group $h={142}>
        <Legend>Measurement Cursors</Legend>
        <CursorBlock>
          <CursorRow><label htmlFor="c1">1</label><Drop id="c1" value="out" /></CursorRow>
          <Readout><span>X: 1.0588</span><span>Y:-66.564m</span></Readout>
          <CursorRow><label htmlFor="c2">2</label><Drop id="c2" value="out" /></CursorRow>
          <TallReadout><span>X: 4.3705M</span><span>Y:-100.90</span></TallReadout>
          <CursorRow><Drop id="diff" label="Difference" value="Cursor 2 - Cursor 1" /></CursorRow>
          <Readout><span>X: 4.3705M</span><span>Y:-100.83</span></Readout>
        </CursorBlock>
      </Group>
    </SidePage>
  </Side>
);

const PictureIcon = () => (
  <Icon size={16}>
    <rect x="1" y="1" width="18" height="18" rx="2" fill="#c84838" stroke="#f0c0b0" />
    <rect x="4" y="4" width="12" height="12" fill="#fff" stroke="none" />
    <path d="M6 14L14 6M7 7L11 11M8 14H14V8" stroke="#a03020" strokeWidth="2" />
  </Icon>
);
const DiskIcon = () => (
  <Icon size={16}>
    <path d="M2 1H18V19H2Z" fill="#101860" />
    <path d="M6 1H14V7H6Z" fill="#c8ccd8" stroke="none" />
    <path d="M4 10H16V18H4Z" fill="#fff" stroke="none" />
    <path d="M4 11H16M4 15H16" stroke="#c03030" strokeWidth="2" />
    <path d="M11 2V6" strokeWidth="2" />
  </Icon>
);

export default function App() {
  return (
    <Desktop>
      <Global />
      <TitleBar>
        <Logo />
        <Title>CircuitMaker - [C:\Program Files\...\buffer opamp.CKT* 100%]</Title>
        <WindowButtons>
          <WindowButton aria-label="Minimize"><Icon size={16}><path d="M4 15H11" stroke="#fff" strokeWidth="3" /></Icon></WindowButton>
          <WindowButton aria-label="Restore">
            <Icon size={16}><path d="M7 7V3H17V12H13M3 8H13V17H3Z" stroke="#fff" strokeWidth="2" /></Icon>
          </WindowButton>
          <WindowButton aria-label="Close" $close><Icon size={16}><path d="M4 4L16 16M16 4L4 16" stroke="#fff" strokeWidth="3" /></Icon></WindowButton>
        </WindowButtons>
      </TitleBar>
      <MenuBar>
        {["File", "Edit", "View", "Options", "Macros", "Simulation", "Wave", "Help"].map((m) => <MenuItem key={m}>{m}</MenuItem>)}
      </MenuBar>
      <ToolBar>
        {toolGroups.map((g) => (
          <React.Fragment key={g.names[0]}>
            {g.names.map((n) => (
              <Tool key={n} aria-label={n} $on={pressed.includes(n)}>
                {toolGlyphs[n] || <Icon>{toolIcons[n]}</Icon>}
              </Tool>
            ))}
            {g.gap > 0 && <ToolGap $w={g.gap} />}
          </React.Fragment>
        ))}
      </ToolBar>
      <Workspace>
        <WavePanel />
        <Documents>
          <SheetView>
            <Schematic />
            <Track $vertical>
              <Arrow aria-label="Scroll up"><Chevron turn={0} /></Arrow>
              <Thumb $vertical $size={26}>
                <svg width="7" height="8" aria-hidden="true"><path d="M0 1H7M0 3H7M0 5H7M0 7H7" stroke="#8ea9e4" shapeRendering="crispEdges" /></svg>
              </Thumb>
              <Space />
              <Arrow aria-label="Scroll down"><Chevron turn={180} /></Arrow>
            </Track>
            <Track>
              <Arrow aria-label="Scroll left"><Chevron turn={270} /></Arrow>
              <Thumb $size={328}>
                <svg width="8" height="7" aria-hidden="true"><path d="M1 0V7M3 0V7M5 0V7M7 0V7" stroke="#8ea9e4" shapeRendering="crispEdges" /></svg>
              </Thumb>
              <Space />
              <Arrow aria-label="Scroll right"><Chevron turn={90} /></Arrow>
            </Track>
          </SheetView>
          <Splitter />
          <PlotView>
            <Gutter>
              <GutterCell $line />
              <GutterCell><svg width="8" height="14" aria-hidden="true"><path d="M0 0L8 7L0 14Z" /></svg></GutterCell>
            </Gutter>
            <Analysis />
          </PlotView>
          <TabStrip>
            <StripLine $w={8} />
            <PlotTab>
              AC Analysis
              <TabOutline width="70" height="17" fill="none" stroke="#000" aria-hidden="true"><path d="M0 0L4 15L6 16H63L65 14L70 0" /></TabOutline>
            </PlotTab>
            <StripLine />
          </TabStrip>
        </Documents>
      </Workspace>
      <Status><StatusCell /><StatusCell /></Status>
      <TaskBar>
        <StartButton>
          <svg width="20" height="20" viewBox="0 0 20 20" aria-hidden="true">
            <path d="M3 3Q6 1 9 3L8 9Q5 7 1 9Z" fill="#f06030" />
            <path d="M11 4Q14 5 18 3L16 9Q13 11 10 10Z" fill="#8ad040" />
            <path d="M1 11Q4 9 7 11L6 17Q3 15 0 17Z" fill="#60a0f8" />
            <path d="M9 12Q12 13 16 11L14 17Q11 19 8 18Z" fill="#f8d040" />
          </svg>
          Start
        </StartButton>
        <Task $on><Logo size={16} />CircuitMaker</Task>
        <Task><DiskIcon />Total Commander 6.5...</Task>
        <Task><PictureIcon />Microsoft Office Pictu...</Task>
        <Task><PictureIcon />Microsoft Office Pictu...</Task>
        <Lang>HU</Lang>
        <Tray>
          <Icon size={16}><path d="M3 14L15 2L18 5L9 15Z" fill="#60c040" /><path d="M2 17H16" stroke="#f0e070" strokeWidth="3" /><path d="M5 13L15 4" stroke="#3040c0" strokeWidth="2" /></Icon>
          <Icon size={16}><path d="M10 1L17 4Q18 14 10 19Q2 14 3 4Z" fill="#d02828" stroke="#f0b0b0" /><path d="M7 7L13 13M13 7L7 13" stroke="#fff" strokeWidth="2" /></Icon>
          <Icon size={16}><path d="M2 7H5L11 1V18L5 13H2Z" fill="#f08040" stroke="#702010" /><path d="M14 4V16M17 2V18" strokeWidth="1.500" /></Icon>
          <Icon size={16}><circle cx="9" cy="8" r="6" fill="#c8c8c8" stroke="#606060" /><circle cx="8" cy="8" r="3" fill="#686868" /><path d="M14 17L18 10M17 18L19 14" stroke="#c0d8f0" /></Icon>
          <Icon size={16}><rect x="3" y="1" width="14" height="18" rx="6" fill="#1820b0" stroke="#101480" /><path d="M6 7L13 13L10 16V4L13 7L6 13" stroke="#e03040" strokeWidth="2" /></Icon>
          <Clock>5:57</Clock>
        </Tray>
      </TaskBar>
    </Desktop>
  );
}
